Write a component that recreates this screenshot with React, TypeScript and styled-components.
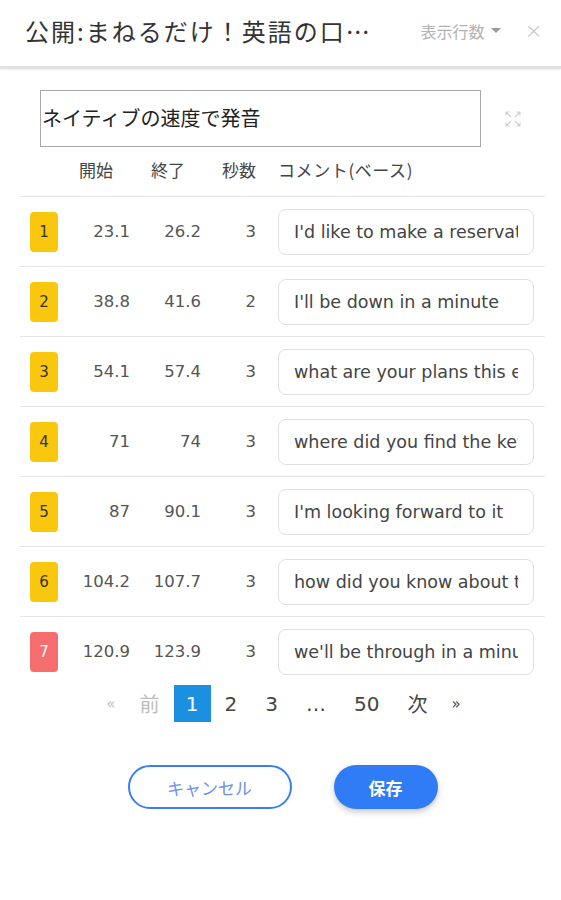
import React from 'react';
import styled, { createGlobalStyle } from 'styled-components';

interface Row {
  no: number;
  start: string;
  end: string;
  sec: number;
  comment: string;
  alert?: boolean;
}

const rows: Row[] = [
  { no: 1, start: '23.1', end: '26.2', sec: 3, comment: "I'd like to make a reservation" },
  { no: 2, start: '38.8', end: '41.6', sec: 2, comment: "I'll be down in a minute" },
  { no: 3, start: '54.1', end: '57.4', sec: 3, comment: 'what are your plans this evening' },
  { no: 4, start: '71', end: '74', sec: 3, comment: 'where did you find the key' },
  { no: 5, start: '87', end: '90.1', sec: 3, comment: "I'm looking forward to it" },
  { no: 6, start: '104.2', end: '107.7', sec: 3, comment: 'how did you know about that' },
  { no: 7, start: '120.9', end: '123.9', sec: 3, comment: "we'll be through in a minute", alert: true },
];

const GlobalStyle = createGlobalStyle`
  body {
    margin: 0;
    background: #fff;
    font-family: 'Noto Sans CJK JP', 'DejaVu Sans', sans-serif;
  }
`;

const App = () => {
  return (
    <Page>
      <GlobalStyle />
      <Header>
        <Title>公開:まねるだけ！英語の口…</Title>
        <RowCount>
          表示行数
          <Caret />
        </RowCount>
        <Close>×</Close>
      </Header>

      <Body>
        <MemoLine>
          <Memo>ネイティブの速度で発音</Memo>
          <ExpandIcon viewBox="0 0 18 18">
            <path d="M2 2 L7 7 M2 2 L2 5.5 M2 2 L5.5 2" />
            <path d="M16 2 L11 7 M16 2 L16 5.5 M16 2 L12.5 2" />
            <path d="M2 16 L7 11 M2 16 L2 12.5 M2 16 L5.5 16" />
            <path d="M16 16 L11 11 M16 16 L16 12.5 M16 16 L12.5 16" />
          </ExpandIcon>
        </MemoLine>

        <HeadRow>
          <span />
          <HeadCell>開始</HeadCell>
          <HeadCell>終了</HeadCell>
          <HeadCell>秒数</HeadCell>
          <span />
          <HeadCell $flush>コメント(ベース)</HeadCell>
        </HeadRow>

        <Table>
          {rows.map((r) => (
            <TableRow key={r.no}>
              <Badge $alert={r.alert}>{r.no}</Badge>
              <Num>{r.start}</Num>
              <Num>{r.end}</Num>
              <Num>{r.sec}</Num>
              <span />
              <CommentInput readOnly value={r.comment} />
            </TableRow>
          ))}
        </Table>

        <Pager>
          <PageLink $muted $small>«</PageLink>
          <PageLink $muted>前</PageLink>
          <PageLink $active>1</PageLink>
          <PageLink>2</PageLink>
          <PageLink>3</PageLink>
          <PageLink>…</PageLink>
          <PageLink>50</PageLink>
          <PageLink>次</PageLink>
          <PageLink $small>»</PageLink>
        </Pager>

        <Actions>
          <CancelButton>キャンセル</CancelButton>
          <SaveButton>保存</SaveButton>
        </Actions>
      </Body>
    </Page>
  );
};

const Page = styled.div`
  width: 561px;
  min-height: 900px;
  background: #fff;
`;

const Header = styled.div`
  display: flex;
  align-items: center;
  height: 61px;
  padding: 0 18px 5px 25px;
  border-bottom: 3px solid #e2e2e2;
  box-shadow: 0 1px 2px rgba(0, 0, 0, 0.06);
`;

const Title = styled.div`
  flex: 1;
  font-size: 24px;
  color: #333;
  white-space: nowrap;
  letter-spacing: 2px;
`;

const RowCount = styled.div`
  display: flex;
  align-items: center;
  gap: 6px;
  font-size: 16px;
  color: #b3b3b3;
  margin-right: 24px;
`;

const Caret = styled.span`
  width: 0;
  height: 0;
  border-left: 5px solid transparent;
  border-right: 5px solid transparent;
  border-top: 5px solid #999;
`;

const Close = styled.div`
  font-family: 'DejaVu Sans', sans-serif;
  font-size: 22px;
  font-weight: 300;
  color: #c4c4c4;
  line-height: 1;
`;

const Body = styled.div`
  padding: 21px 16px 0 20px;
`;

const MemoLine = styled.div`
  display: flex;
  align-items: center;
  padding-left: 20px;
`;

const Memo = styled.div`
  width: 441px;
  height: 57px;
  box-sizing: border-box;
  border: 1px solid #a8a8a8;
  display: flex;
  align-items: center;
  font-size: 20px;
  color: #222;
  padding: 0 0 2px 1px;
`;

const ExpandIcon = styled.svg`
  width: 18px;
  height: 18px;
  margin-left: 23px;
  fill: none;
  stroke: #cfcfcf;
  stroke-width: 1.2;
`;

const grid = `
  display: grid;
  grid-template-columns: 28px 72px 71px 55px 22px 256px;
  padding-left: 10px;
`;

const HeadRow = styled.div`
  ${grid}
  height: 49px;
  align-items: center;
  padding-bottom: 4px;
  box-sizing: border-box;
`;

const HeadCell = styled.div<{ $flush?: boolean }>`
  font-size: 17px;
  color: #444;
  padding-left: ${(p) => (p.$flush ? '0' : '21px')};
  white-space: nowrap;
  letter-spacing: ${(p) => (p.$flush ? '0.6px' : '0')};
`;

const Table = styled.div`
  width: 525px;
`;

const TableRow = styled.div`
  ${grid}
  height: 69px;
  align-items: center;
  border-top: 1px solid #e6e6e6;
`;

const Badge = styled.div<{ $alert?: boolean }>`
  width: 28px;
  height: 40px;
  border-radius: 4px;
  background: ${(p) => (p.$alert ? '#f66d6d' : '#fac70f')};
  color: ${(p) => (p.$alert ? '#fff' : '#333')};
  font-family: 'DejaVu Sans', sans-serif;
  font-size: 15px;
  display: flex;
  align-items: center;
  justify-content: center;
`;

const Num = styled.div`
  text-align: right;
  font-family: 'DejaVu Sans', sans-serif;
  font-size: 16.5px;
  color: #555;
`;

const CommentInput = styled.input`
  width: 256px;
  height: 46px;
  border: 1px solid #e0e0e0;
  border-radius: 8px;
  box-sizing: border-box;
  padding: 0 15px;
  margin: 0;
  outline: none;
  background: #fff;
  font-family: 'DejaVu Sans', sans-serif;
  font-size: 17.5px;
  color: #444;
`;

const Pager = styled.div`
  display: flex;
  align-items: center;
  justify-content: center;
  height: 37px;
  margin-top: -1px;
  padding-left: 2px;
`;

const PageLink = styled.div<{ $active?: boolean; $muted?: boolean; $small?: boolean }>`
  min-width: ${(p) => (p.$small ? '0' : '37px')};
  box-sizing: border-box;
  height: 37px;
  padding: 0 ${(p) => (p.$active ? '12px' : p.$small ? '10px' : '14px')};
  display: flex;
  align-items: center;
  justify-content: center;
  font-family: 'DejaVu Sans', 'Noto Sans CJK JP', sans-serif;
  font-size: ${(p) => (p.$small ? '15px' : '20px')};
  background: ${(p) => (p.$active ? '#1b8fe0' : 'transparent')};
  color: ${(p) => (p.$active ? '#fff' : p.$muted ? '#bdbdbd' : '#444')};
`;

const Actions = styled.div`
  display: flex;
  justify-content: center;
  gap: 42px;
  margin-top: 43px;
`;

const CancelButton = styled.button`
  width: 164px;
  height: 44px;
  border-radius: 22px;
  border: 2px solid #3a7ff2;
  background: #fff;
  color: #6f8ef0;
  font-family: 'Noto Sans CJK JP', sans-serif;
  font-size: 17px;
`;

const SaveButton = styled.button`
  width: 104px;
  height: 44px;
  border-radius: 22px;
  border: none;
  background: #2f7cf6;
  color: #fff;
  font-family: 'Noto Sans CJK JP', sans-serif;
  font-size: 17px;
  font-weight: 700;
  box-shadow: 0 3px 6px rgba(0, 0, 0, 0.22);
`;

export default App;
